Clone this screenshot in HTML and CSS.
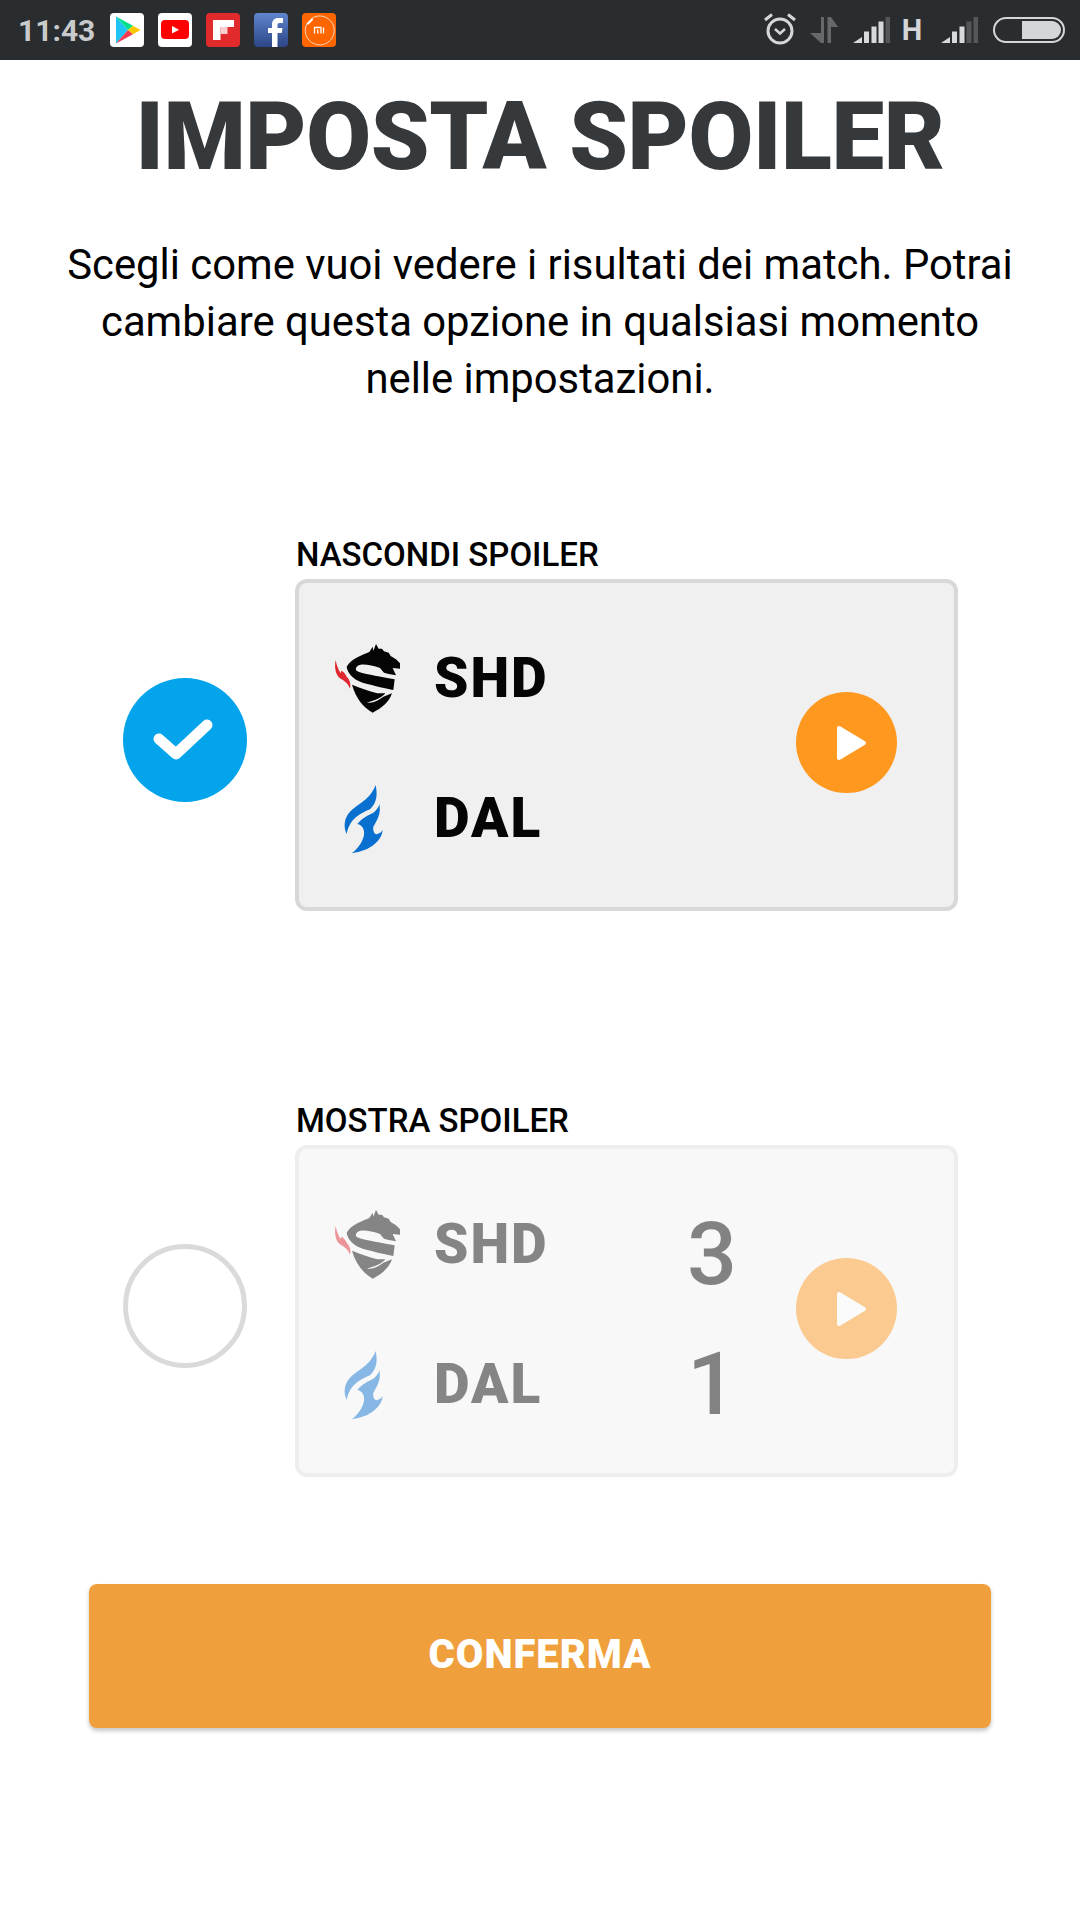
FILE: index.html
```html
<!DOCTYPE html>
<html lang="it">
<head>
<meta charset="utf-8">
<title>Imposta spoiler</title>
<link rel="stylesheet" href="styles.css">
</head>
<body>
<header class="status">
  <span class="time">11:43</span>
  <div class="apps">
    <svg class="app" viewBox="0 0 34 34"><rect width="34" height="34" rx="4" fill="#fff"/><path d="M6 3.500 18 17 6 30.500Z" fill="#1fc4f4"/><path d="M6 3.500 23 12.800 18 17Z" fill="#00e08a"/><path d="M6 30.500 23 21.200 18 17Z" fill="#f5394f"/><path d="M23 12.800 30.500 17 23 21.200 18 17Z" fill="#ffc800"/></svg>
    <svg class="app" viewBox="0 0 34 34"><rect width="34" height="34" rx="4" fill="#fff"/><rect x="3" y="7" width="28" height="19" rx="4" fill="#f00"/><path d="M14 13 21 16.700 14 20.500Z" fill="#fff"/></svg>
    <svg class="app" viewBox="0 0 34 34"><rect width="34" height="34" rx="4" fill="#e12a2c"/><path d="M7 7H28V14H14.500V27H7Z" fill="#fff"/><rect x="14.500" y="14" width="7" height="7" fill="#fbcfd0"/></svg>
    <svg class="app" viewBox="0 0 34 34"><defs><linearGradient id="fb" x1="0" y1="0" x2="0" y2="1"><stop offset="0" stop-color="#5f86cf"/><stop offset="1" stop-color="#2c4586"/></linearGradient></defs><rect width="34" height="34" rx="4" fill="url(#fb)"/><path d="M18 34V20H14V15H18V11.500C18 7.500 20.500 5 24 5H29V10H25.500C24 10 23.500 10.800 23.500 12V15H28.500L27.800 20H23.500V34Z" fill="#fff"/></svg>
    <svg class="app" viewBox="0 0 34 34"><rect width="34" height="34" rx="4" fill="#ff6600"/><path d="M9.500 5.500A14.500 14.500 0 1 1 5 10.500" fill="none" stroke="#fff" stroke-width=".7"/><path d="M6 10.500 10 6.500" stroke="#fff" stroke-width="2.200" stroke-linecap="round"/><path d="M12.500 20.500V14.500H19V20.500M15.800 16.500V20.500M21.500 14.500V20.500" fill="none" stroke="#fff" stroke-width="1.300"/></svg>
  </div>
  <div class="indicators">
    <svg class="alarm" viewBox="0 0 32 32"><circle cx="16" cy="18" r="12" fill="none" stroke="#d5d6d7" stroke-width="3"/><path d="M1 7 8 1.500M31 7 24 1.500" stroke="#d5d6d7" stroke-width="3"/><path d="M11 16 16 20.500 21 16" fill="none" stroke="#d5d6d7" stroke-width="2.500"/></svg>
    <svg class="arrows" viewBox="0 0 28 26"><path d="M11 0H14V26H11L0 16H11Z" fill="#66686a"/><path d="M17.500 26V0H21L28 10H21V26Z" fill="#66686a"/></svg>
    <svg class="signal" viewBox="0 0 37 26"><path d="M0 26 9 20V26Z" fill="#d8d9da"/><rect x="11" y="14.500" width="5" height="11.500" fill="#d8d9da"/><rect x="18.500" y="9.500" width="5" height="16.500" fill="#d8d9da"/><rect x="25.500" y="4.500" width="5" height="21.500" fill="#d8d9da"/><rect x="32.500" y="0" width="4.500" height="26" fill="#55575a"/></svg>
    <span class="net">H</span>
    <svg class="signal" viewBox="0 0 37 26"><path d="M0 26 9 20V26Z" fill="#d8d9da"/><rect x="11" y="14.500" width="5" height="11.500" fill="#d8d9da"/><rect x="18.500" y="9.500" width="5" height="16.500" fill="#d8d9da"/><rect x="25.500" y="4.500" width="5" height="21.500" fill="#55575a"/><rect x="32.500" y="0" width="4.500" height="26" fill="#55575a"/></svg>
    <div class="battery"><span class="charge"></span></div>
  </div>
</header>

<main class="page">
  <h1 class="title">IMPOSTA SPOILER</h1>
  <p class="intro">Scegli come vuoi vedere i risultati dei match. Potrai cambiare questa opzione in qualsiasi momento nelle impostazioni.</p>

  <section class="option">
    <div class="radio checked">
      <svg class="tick" viewBox="0 0 60 42"><path d="M6 20 23 35 54 6" fill="none" stroke="#fff" stroke-width="11" stroke-linecap="round" stroke-linejoin="round"/></svg>
    </div>
    <div class="choice">
      <h2 class="label">NASCONDI SPOILER</h2>
      <div class="card">
        <div class="card-body">
          <div class="teams">
            <div class="team">
              <svg class="logo" viewBox="0 0 270 300"><use href="#dragon"/></svg>
              <span class="abbr">SHD</span>
            </div>
            <div class="team">
              <svg class="logo" viewBox="0 0 270 300"><use href="#flame"/></svg>
              <span class="abbr">DAL</span>
            </div>
          </div>
          <div class="play"><svg class="play-icon" viewBox="0 0 31 36"><path d="M3 3 28 18 3 33Z" fill="#fff" stroke="#fff" stroke-width="4" stroke-linejoin="round"/></svg></div>
        </div>
      </div>
    </div>
  </section>

  <section class="option second">
    <div class="radio"></div>
    <div class="choice">
      <h2 class="label">MOSTRA SPOILER</h2>
      <div class="card muted">
        <div class="card-body">
          <div class="teams">
            <div class="team">
              <svg class="logo" viewBox="0 0 270 300"><use href="#dragon"/></svg>
              <span class="abbr">SHD</span>
              <span class="score low">3</span>
            </div>
            <div class="team">
              <svg class="logo" viewBox="0 0 270 300"><use href="#flame"/></svg>
              <span class="abbr">DAL</span>
              <span class="score">1</span>
            </div>
          </div>
          <div class="play"><svg class="play-icon" viewBox="0 0 31 36"><path d="M3 3 28 18 3 33Z" fill="#fff" stroke="#fff" stroke-width="4" stroke-linejoin="round"/></svg></div>
        </div>
      </div>
    </div>
  </section>

  <button class="confirm">CONFERMA</button>
</main>

<svg class="defs" width="0" height="0">
  <defs>
    <g id="dragon">
      <path d="M47 90C42 115 48 135 60 145C72 152 84 160 90 176C94 160 88 148 80 140C76 132 72 125 64 122L62 130C54 118 50 105 47 90Z" fill="#e0262e"/>
      <path d="M80 110C95 85 125 76 148 66L158 50 160 62 168 42 176 56 186 56 192 64 206 68 212 78 228 88 240 100 240 116 218 114 228 136 206 132 192 128 180 114C160 106 135 102 122 104C112 106 106 112 108 120C112 128 150 134 224 148L220 180C200 176 165 168 128 158C98 148 82 128 80 110Z" fill="#050505"/>
      <path d="M96 164C125 176 150 184 172 190L196 190C190 200 165 212 140 218C150 220 170 216 190 200L216 190C208 215 185 235 158 248C130 232 108 205 96 164Z" fill="#050505"/>
    </g>
    <g id="flame">
      <path d="M167 45C174 80 168 100 150 118C125 128 105 140 92 160C86 170 82 180 80 192C70 170 72 145 90 125C115 100 150 90 167 45Z" fill="#0a70d0"/>
      <path d="M178 102C184 130 172 150 160 170C158 185 165 195 172 192C180 190 185 186 188 180C186 205 165 225 140 238C125 244 110 248 95 250C115 235 128 215 132 195C134 180 128 165 112 162C125 145 145 135 160 128C170 120 176 112 178 102Z" fill="#0a70d0"/>
    </g>
  </defs>
</svg>
</body>
</html>
```
FILE: styles.css
```css
* { box-sizing: border-box; }

html, body {
  margin: 0;
  padding: 0;
}

body {
  width: 1080px;
  height: 1920px;
  background: #fff;
  font-family: Roboto, "Liberation Sans", sans-serif;
  color: #000;
  overflow: hidden;
}

.status {
  height: 60px;
  background: #2a2d30;
  display: flex;
  align-items: center;
  padding-left: 18px;
  padding-right: 15px;
}

.time {
  font-size: 30px;
  font-weight: 700;
  color: #c9cacb;
  width: 92px;
}

.apps {
  display: flex;
  gap: 14px;
}

.app {
  width: 34px;
  height: 34px;
  display: block;
}

.indicators {
  margin-left: auto;
  display: flex;
  align-items: center;
}

.alarm { width: 32px; height: 32px; margin-right: 14px; margin-top: -3px; }
.arrows { width: 28px; height: 26px; margin-right: 15px; }
.signal { width: 37px; height: 26px; }
.net {
  width: 51px;
  padding-right: 7px;
  text-align: center;
  font-size: 29px;
  font-weight: 700;
  color: #d5d6d7;
  line-height: 26px;
}

.battery {
  width: 72px;
  height: 26px;
  margin-left: 15px;
  border: 2px solid #d5d6d7;
  border-radius: 13px;
  padding: 2px;
  display: flex;
  justify-content: flex-end;
}

.charge {
  width: 39px;
  background: #d5d6d7;
  border-radius: 0 10px 10px 0;
}

.title {
  margin: 22px 0 0;
  height: 110px;
  line-height: 110px;
  text-align: center;
  font-size: 94px;
  font-weight: 900;
  letter-spacing: -0.4px;
  color: #36393c;
}

.intro {
  margin: 44px auto 0;
  width: 970px;
  text-align: center;
  font-size: 41.8px;
  line-height: 57px;
  color: #000;
}

.option {
  display: flex;
  align-items: flex-start;
  padding-left: 123px;
  gap: 48px;
  margin-top: 128px;
}

.option.second {
  margin-top: 190px;
}

.radio {
  width: 124px;
  height: 124px;
  flex: none;
  margin-top: 143px;
  border-radius: 50%;
  border: 5px solid #dadada;
  display: flex;
  align-items: center;
  justify-content: center;
}

.radio.checked {
  background: #03a4ec;
  border: 0;
}

.tick {
  width: 60px;
  height: 42px;
  margin-right: 4px;
}

.label {
  margin: 0 0 4px 1px;
  height: 40px;
  line-height: 40px;
  font-size: 33px;
  font-weight: 500;
}

.card {
  width: 663px;
  height: 332px;
  border: 4px solid #d8d8d8;
  border-radius: 12px;
  background: #f0f0f0;
}

.card.muted {
  border-color: #eeeeee;
  background: #f8f8f8;
}

.card.muted .card-body {
  opacity: 0.47;
}

.card-body {
  height: 100%;
  display: flex;
}

.teams {
  padding: 47px 0 0 21px;
  display: flex;
  flex-direction: column;
  gap: 40px;
  flex: none;
  width: 497px;
}

.team {
  height: 100px;
  display: flex;
  align-items: center;
}

.logo {
  width: 90px;
  height: 100px;
  flex: none;
}

.abbr {
  margin-left: 24px;
  width: 253px;
  font-size: 55px;
  line-height: 100px;
  font-weight: 900;
  letter-spacing: 2px;
  color: #050505;
  margin-top: -4px;
}

.score {
  font-size: 88px;
  font-weight: 500;
  line-height: 100px;
  color: #000;
  margin-top: -4px;
}

.score.low {
  margin-top: 16px;
}

.play {
  width: 101px;
  height: 101px;
  flex: none;
  margin-top: 109px;
  border-radius: 50%;
  background: #ff981f;
  display: flex;
  align-items: center;
  justify-content: center;
}

.play-icon {
  width: 31px;
  height: 36px;
  margin-left: 10px;
}

.confirm {
  display: block;
  margin: 107px 0 0 89px;
  padding: 0 0 4px;
  width: 902px;
  height: 144px;
  border: 0;
  border-radius: 8px;
  background: #ef9f3b;
  box-shadow: 0 3px 4px rgba(0, 0, 0, 0.22);
  color: #fff;
  font-family: Roboto, "Liberation Sans", sans-serif;
  font-size: 40px;
  font-weight: 900;
  letter-spacing: 1px;
}

.defs {
  position: absolute;
}
```
